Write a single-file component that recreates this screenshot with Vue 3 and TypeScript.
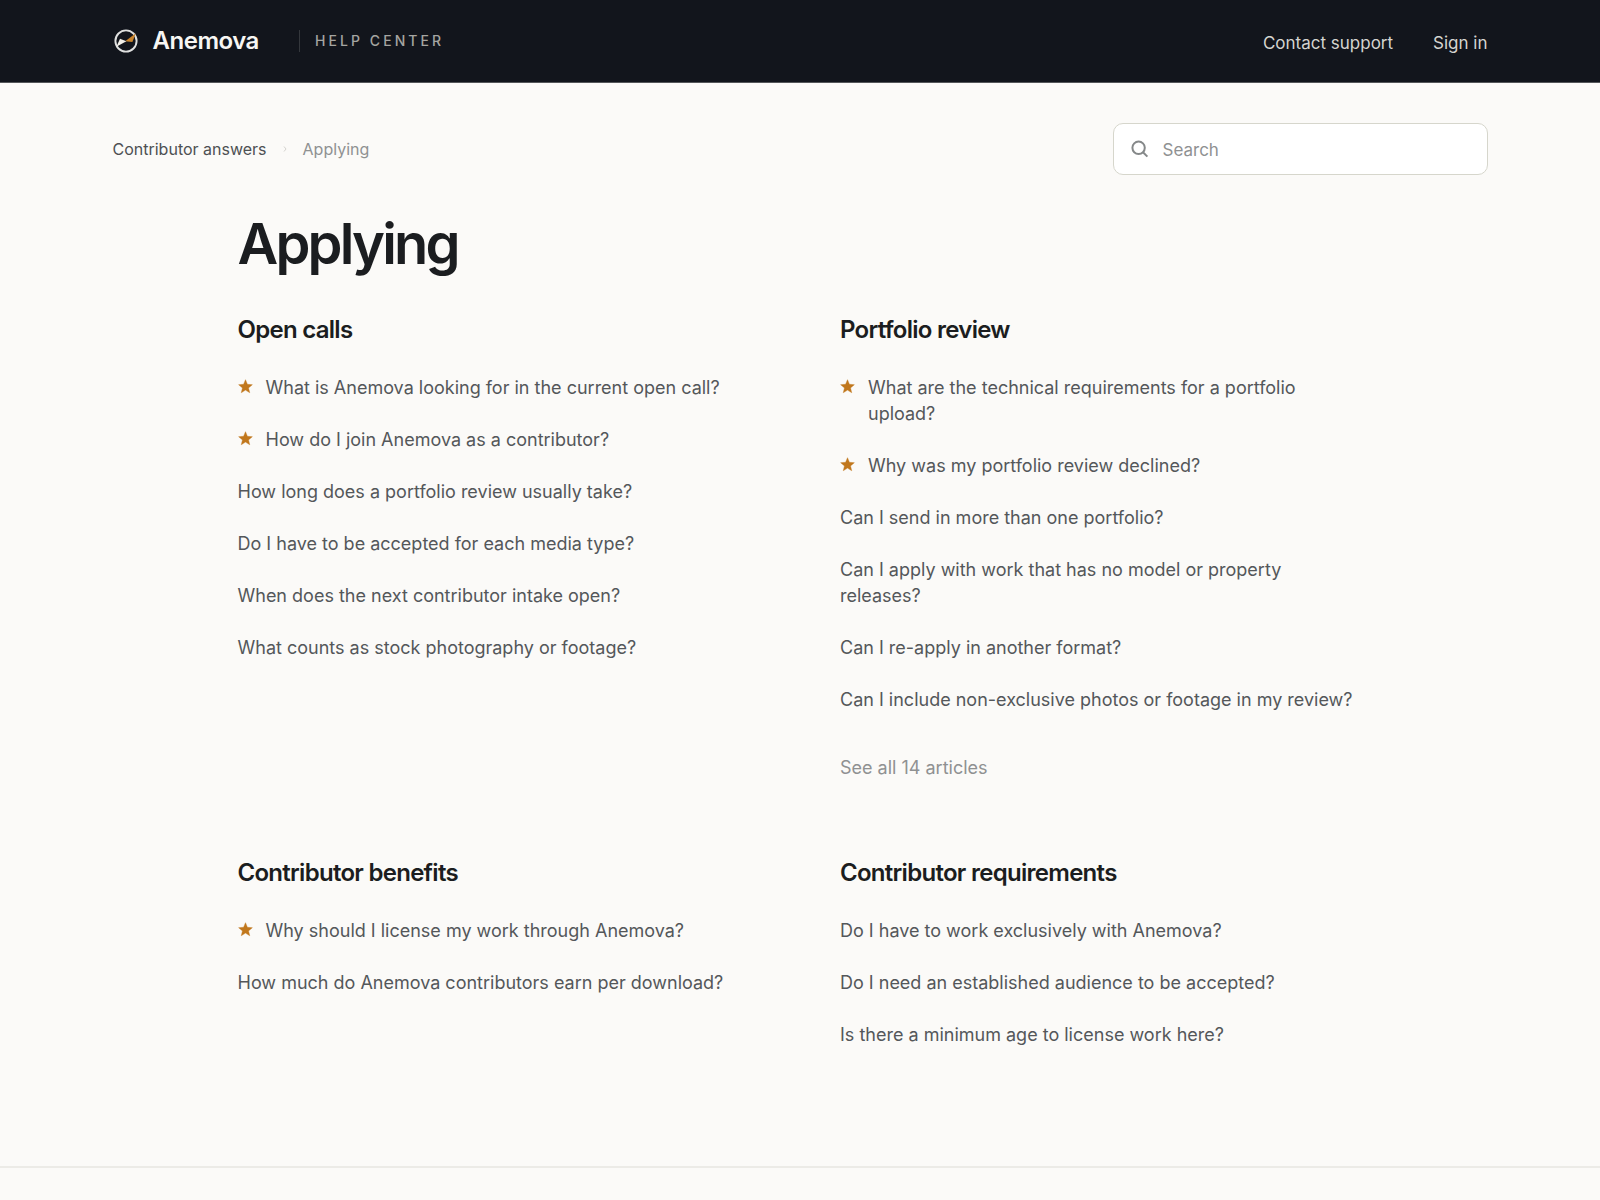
<script setup lang="ts">
interface Article {
  title: string
  promoted?: boolean
}

interface Section {
  title: string
  articles: Article[]
  total?: number
}

const sections: Section[] = [
  {
    title: 'Open calls',
    articles: [
      { title: 'What is Anemova looking for in the current open call?', promoted: true },
      { title: 'How do I join Anemova as a contributor?', promoted: true },
      { title: 'How long does a portfolio review usually take?' },
      { title: 'Do I have to be accepted for each media type?' },
      { title: 'When does the next contributor intake open?' },
      { title: 'What counts as stock photography or footage?' },
    ],
  },
  {
    title: 'Portfolio review',
    total: 14,
    articles: [
      { title: 'What are the technical requirements for a portfolio upload?', promoted: true },
      { title: 'Why was my portfolio review declined?', promoted: true },
      { title: 'Can I send in more than one portfolio?' },
      { title: 'Can I apply with work that has no model or property releases?' },
      { title: 'Can I re-apply in another format?' },
      { title: 'Can I include non-exclusive photos or footage in my review?' },
    ],
  },
  {
    title: 'Contributor benefits',
    articles: [
      { title: 'Why should I license my work through Anemova?', promoted: true },
      { title: 'How much do Anemova contributors earn per download?' },
    ],
  },
  {
    title: 'Contributor requirements',
    articles: [
      { title: 'Do I have to work exclusively with Anemova?' },
      { title: 'Do I need an established audience to be accepted?' },
      { title: 'Is there a minimum age to license work here?' },
    ],
  },
]
</script>

<template>
  <div class="page">
    <header class="header">
      <div class="container header-row">
        <a class="brand" href="#">
          <svg class="logo" viewBox="0 0 24 24" aria-hidden="true">
            <circle cx="12" cy="12" r="10.6" fill="none" stroke="#dfe0df" stroke-width="1.9" />
            <path d="M21.8 4.2 18.4 12.9 11.2 12.3Z" fill="#c9832a" />
            <path d="M2.4 17.8 6 9.7 12.4 12.2Z" fill="#f2efe8" />
          </svg>
          <span class="brand-name">Anemova</span>
        </a>
        <span class="tagline">HELP CENTER</span>
        <nav class="nav" aria-label="Account">
          <a href="#">Contact support</a>
          <a href="#">Sign in</a>
        </nav>
      </div>
    </header>

    <main class="container main">
      <div class="subnav">
        <nav class="crumbs" aria-label="Breadcrumb">
          <a href="#">Contributor answers</a>
          <svg class="chevron" viewBox="0 0 4 8" aria-hidden="true">
            <path d="M1 1.5 3 4 1 6.5" fill="none" stroke="#d4d3cf" stroke-width="1" />
          </svg>
          <span aria-current="page">Applying</span>
        </nav>
        <form class="search" role="search" @submit.prevent>
          <svg class="search-icon" viewBox="0 0 18 18" aria-hidden="true">
            <circle cx="7.6" cy="7.8" r="6.2" fill="none" stroke="#858889" stroke-width="2" />
            <path d="M12 12.2 16.4 16.6" fill="none" stroke="#858889" stroke-width="2" />
          </svg>
          <input type="search" placeholder="Search" aria-label="Search" />
        </form>
      </div>

      <div class="content">
        <h1>Applying</h1>
        <div class="sections">
          <section v-for="section in sections" :key="section.title">
            <h2>{{ section.title }}</h2>
            <ul>
              <li v-for="article in section.articles" :key="article.title">
                <svg v-if="article.promoted" class="star" viewBox="0 0 15 15" role="img" aria-label="Promoted">
                  <path
                    d="M7.5.7 9.38 5.31 14.35 5.67 10.54 8.89 11.73 13.72 7.5 11.1 3.27 13.72 4.46 8.89.65 5.67 5.62 5.31Z"
                    fill="#c1771c"
                    stroke="#c1771c"
                    stroke-width="0.4"
                  />
                </svg>
                <a href="#">{{ article.title }}</a>
              </li>
            </ul>
            <a v-if="section.total" class="see-all" href="#">See all {{ section.total }} articles</a>
          </section>
        </div>
      </div>
    </main>

    <footer class="footer"></footer>
  </div>
</template>

<style>
body {
  margin: 0;
  background: #fbfaf8;
}
</style>

<style scoped>
.page {
  font-family: Inter, "Liberation Sans", sans-serif;
  font-size: 18px;
  line-height: 26px;
  color: #1b1d20;
}

a {
  color: inherit;
  text-decoration: none;
}

.container {
  box-sizing: border-box;
  max-width: 1423px;
  margin: 0 auto;
  padding: 0 24px;
}

.header {
  background: #12151c;
  border-bottom: 1px solid #55575a;
}

.header-row {
  display: flex;
  align-items: center;
  height: 82px;
}

.brand {
  display: flex;
  align-items: center;
  gap: 15px;
}

.logo {
  width: 24px;
  height: 24px;
  padding-left: 1px;
}

.brand-name {
  font-size: 24px;
  font-weight: 600;
  letter-spacing: -0.02em;
  color: #f7f6f3;
}

.tagline {
  margin-left: 40px;
  padding-left: 15px;
  border-left: 1px solid #34373c;
  font-size: 14px;
  line-height: 22px;
  font-weight: 500;
  letter-spacing: 0.22em;
  color: #a5a5a1;
}

.nav {
  display: flex;
  gap: 40px;
  margin-left: auto;
  padding-top: 3px;
  font-size: 17px;
  color: #d5d4d0;
}

.main {
  padding-top: 40px;
  padding-bottom: 118px;
}

.subnav {
  display: flex;
  align-items: center;
  justify-content: space-between;
}

.crumbs {
  display: flex;
  align-items: center;
  gap: 16px;
  font-size: 16px;
  color: #4d5053;
}

.crumbs span {
  color: #8f9192;
}

.chevron {
  width: 4px;
  height: 8px;
}

.search {
  display: flex;
  align-items: center;
  gap: 14px;
  box-sizing: border-box;
  width: 375px;
  height: 52px;
  padding: 0 17px;
  background: #fff;
  border: 1px solid #d6d6cc;
  border-radius: 10px;
}

.search-icon {
  flex: none;
  width: 18px;
  height: 18px;
}

.search input {
  flex: 1;
  min-width: 0;
  padding: 2px 0 0;
  border: 0;
  outline: 0;
  background: none;
  font: inherit;
  font-size: 17px;
  color: inherit;
}

.search input::placeholder {
  color: #8f9192;
  opacity: 1;
}

.content {
  padding: 0 125px;
}

h1 {
  margin: 37px 0 39px;
  font-size: 56px;
  line-height: 64px;
  font-weight: 600;
  letter-spacing: -0.05em;
}

.sections {
  display: grid;
  grid-template-columns: repeat(2, minmax(0, 1fr));
  gap: 77px 80px;
}

h2 {
  margin: 0 0 30px;
  font-size: 24px;
  line-height: 30px;
  font-weight: 600;
  letter-spacing: -0.03em;
}

ul {
  display: flex;
  flex-direction: column;
  gap: 26px;
  margin: 0;
  padding: 0;
  list-style: none;
}

li {
  display: flex;
  gap: 13px;
  color: #54575a;
}

.star {
  flex: none;
  width: 15px;
  height: 15px;
  margin-top: 4px;
}

.see-all {
  display: block;
  margin-top: 42px;
  color: #8f9192;
}

.footer {
  height: 30px;
  border-top: 2px solid #ecebe7;
}
</style>
